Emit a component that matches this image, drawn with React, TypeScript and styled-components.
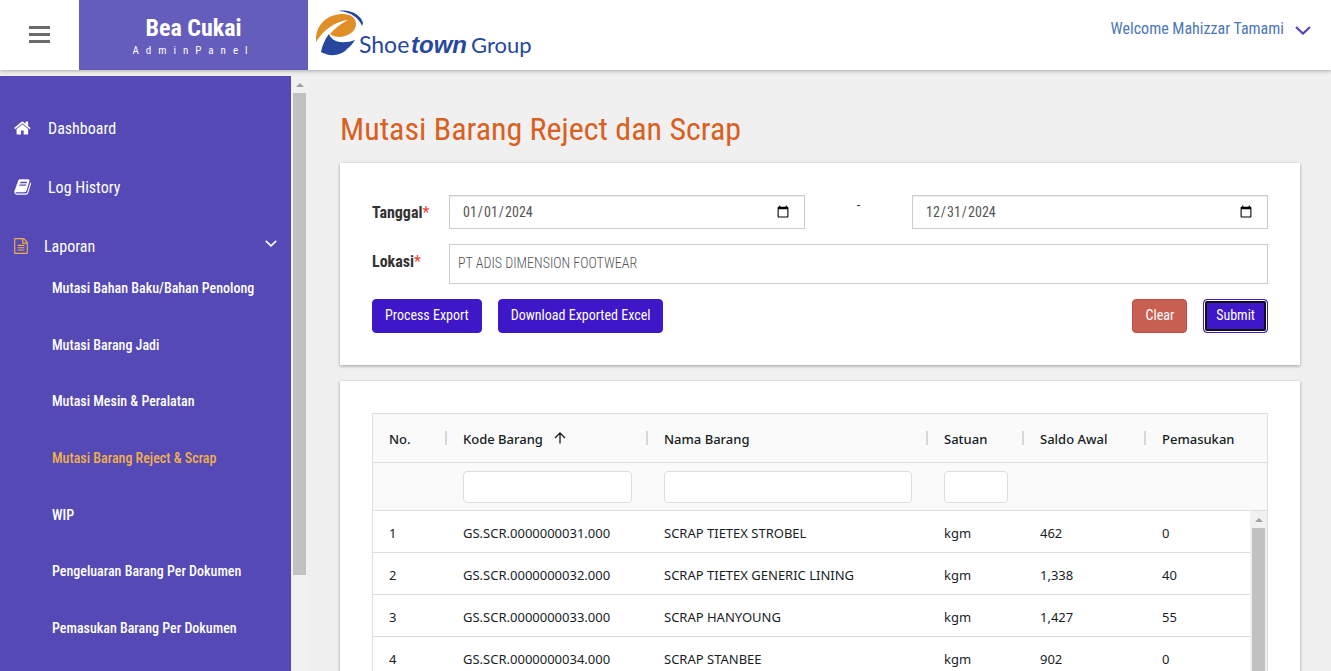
import React from "react";
import styled, { createGlobalStyle } from "styled-components";

const condensed = `"Roboto Condensed", "Liberation Sans Narrow", Roboto, sans-serif`;
const gridFont = `"Noto Sans", "Open Sans", sans-serif`;

const GlobalStyle = createGlobalStyle`
  *, *::before, *::after { box-sizing: border-box; }
  body { margin: 0; background: #f0f0f0; color: #333; font: 14px/20px ${condensed}; }
  button, input { font: inherit; }
  ul { list-style: none; margin: 0; padding: 0; }
  a { text-decoration: none; color: inherit; }
`;

const Page = styled.div`
  display: flex;
  flex-direction: column;
  height: 100vh;
  overflow: hidden;
`;

const Header = styled.header`
  display: flex;
  flex: none;
  height: 70px;
  margin-bottom: 6px;
  background: #fff;
  box-shadow: 0 1px 4px rgba(0, 0, 0, 0.3);
`;

const MenuToggle = styled.button`
  display: flex;
  align-items: center;
  justify-content: center;
  width: 79px;
  padding: 0 0 2px;
  border: 0;
  background: none;
  color: #6b6b6b;
`;

const Brand = styled.a`
  display: flex;
  flex-direction: column;
  align-items: center;
  width: 229px;
  padding-top: 12px;
  background: #655dbb;
  color: #fff;
`;

const BrandName = styled.span`
  font-size: 24px;
  line-height: 32px;
  font-weight: 700;
`;

const BrandSub = styled.span`
  font-size: 11px;
  line-height: 14px;
  letter-spacing: 7px;
`;

const LogoLink = styled.a`
  display: block;
  padding: 8px 8px 0;
`;

const UserMenu = styled.button`
  display: flex;
  align-items: center;
  gap: 11px;
  height: 57px;
  margin-left: auto;
  padding: 0 20px 0 0;
  border: 0;
  background: none;
  color: #4d77ba;
  font-size: 16px;
  svg { margin-top: 4px; }
`;

const Body = styled.div`
  display: flex;
  flex: 1;
  min-height: 0;
`;

const Sidebar = styled.aside`
  display: flex;
  flex: none;
  width: 308px;
  overflow: hidden;
`;

const Nav = styled.nav`
  flex: 1;
  padding-top: 23px;
  background: #5449b5;
  color: #fff;
`;

const NavLink = styled.a`
  display: flex;
  align-items: center;
  gap: 16px;
  height: 59px;
  padding: 0 14px;
  font-size: 16px;
  > svg { margin-bottom: 2px; }
`;

const NavChevron = styled.span`
  display: flex;
  margin-left: auto;
  padding-bottom: 6px;
`;

const SubList = styled.ul`
  display: grid;
  grid-auto-rows: 1fr;
  height: 396px;
  margin-top: -16px;
`;

const SubLink = styled.a<{ $active?: boolean }>`
  display: flex;
  align-items: center;
  height: 100%;
  padding-left: 52px;
  font-size: 14px;
  font-weight: 500;
  color: ${(p) => (p.$active ? "#f0b04c" : "#fff")};
`;

const Track = styled.div`
  display: flex;
  flex-direction: column;
  align-items: center;
  width: 17px;
  background: #f1f1f1;
`;

const TrackArrow = styled.span`
  flex: none;
  height: 17px;
  padding-top: 7px;
  &::before {
    content: "";
    display: block;
    border: 4px solid transparent;
    border-top: 0;
    border-bottom-color: #a0a0a0;
  }
`;

const Thumb = styled.span<{ $size: string }>`
  width: 13px;
  height: ${(p) => p.$size};
  background: #c1c1c1;
`;

const Main = styled.main`
  flex: 1;
  min-width: 0;
  padding: 32px 31px 32px 32px;
  overflow: hidden;
`;

const Title = styled.h1`
  margin: 0 0 13px;
  font-size: 32px;
  line-height: 42px;
  font-weight: 400;
  color: #d9601f;
`;

const Card = styled.section`
  margin-bottom: 16px;
  padding: 32px;
  background: #fff;
  box-shadow: 0 1px 3px rgba(0, 0, 0, 0.35);
`;

const FormGrid = styled.form`
  display: grid;
  grid-template-columns: 77px 1fr 107px 1fr;
  row-gap: 15px;
`;

const Label = styled.label`
  padding-top: 8px;
  font-size: 16px;
  font-weight: 700;
  color: #333;
`;

const Required = styled.span`
  font-weight: 400;
  color: #e8432e;
`;

const DateInput = styled.input`
  width: 100%;
  height: 34px;
  padding: 0 12px;
  border: 1px solid #ccc;
  border-radius: 0;
  background: #fff;
  box-shadow: inset 0 1px 1px rgba(0, 0, 0, 0.08);
  color: #555;
  font-size: 14px;
`;

const Dash = styled.span`
  padding-bottom: 14px;
  align-self: center;
  text-align: center;
`;

const TextInput = styled.input`
  grid-column: 2 / -1;
  height: 40px;
  padding: 0 8px 2px;
  border: 1px solid #ccc;
  background: #fff;
  color: #555;
  font-size: 14px;
  font-weight: 300;
`;

const Actions = styled.div`
  grid-column: 1 / -1;
  display: flex;
  gap: 16px;
`;

const Button = styled.button<{ $tone?: "danger"; $focused?: boolean; $end?: boolean }>`
  height: 34px;
  margin-left: ${(p) => (p.$end ? "auto" : "0")};
  padding: 0 12px 2px;
  border: 1px solid ${(p) => (p.$tone ? "#c04f42" : "#3d17c8")};
  border-radius: 4px;
  background: ${(p) => (p.$tone ? "#c85f53" : "#3d17c8")};
  box-shadow: ${(p) => (p.$focused ? "inset 0 0 0 1px #fff, inset 0 0 0 3px #101010" : "none")};
  color: #fff;
  font-size: 14px;
  white-space: nowrap;
`;

const GridFrame = styled.div`
  position: relative;
  border: 1px solid #ddd;
`;

const GridTrack = styled(Track)`
  position: absolute;
  top: 97px;
  right: 0;
  bottom: 0;
`;

const Table = styled.table`
  width: 100%;
  table-layout: fixed;
  border-collapse: separate;
  border-spacing: 0;
  font-family: ${gridFont};
  font-size: 13px;
  color: #181d1f;
  th, td {
    padding: 2px 16px 0;
    text-align: left;
    border-bottom: 1px solid #ddd;
    white-space: nowrap;
  }
`;

const HeadCell = styled.th`
  height: 49px;
  background: linear-gradient(#d8d8d8, #d8d8d8) right center / 2px 14px no-repeat #fafafa;
  && { font-weight: 500; }
  &:last-child { background: #fafafa; }
`;

const HeadLabel = styled.span`
  display: flex;
  align-items: center;
  gap: 11px;
  svg { margin-bottom: 2px; }
`;

const FilterCell = styled.td`
  height: 48px;
  background: #fafafa;
  && { padding-top: 0; }
`;

const FilterInput = styled.input`
  display: block;
  width: 100%;
  height: 32px;
  padding: 0 8px;
  border: 1px solid #ddd;
  border-radius: 4px;
  background: #fff;
`;

const Cell = styled.td`
  height: 42px;
`;

const columns = [
  { name: "No.", width: 74 },
  { name: "Kode Barang", width: 201, filter: true, sorted: true },
  { name: "Nama Barang", width: 280, filter: true },
  { name: "Satuan", width: 96, filter: true },
  { name: "Saldo Awal", width: 122 },
  { name: "Pemasukan" },
];

const rows = [
  ["1", "GS.SCR.0000000031.000", "SCRAP TIETEX STROBEL", "kgm", "462", "0"],
  ["2", "GS.SCR.0000000032.000", "SCRAP TIETEX GENERIC LINING", "kgm", "1,338", "40"],
  ["3", "GS.SCR.0000000033.000", "SCRAP HANYOUNG", "kgm", "1,427", "55"],
  ["4", "GS.SCR.0000000034.000", "SCRAP STANBEE", "kgm", "902", "0"],
];

const reports = [
  "Mutasi Bahan Baku/Bahan Penolong",
  "Mutasi Barang Jadi",
  "Mutasi Mesin & Peralatan",
  "Mutasi Barang Reject & Scrap",
  "WIP",
  "Pengeluaran Barang Per Dokumen",
  "Pemasukan Barang Per Dokumen",
];

const HomeIcon = () => (
  <svg width="18" height="18" viewBox="64 0 1664 1792" fill="currentColor" aria-hidden="true">
    <path d="M1408 992v480q0 26-19 45t-45 19h-384v-384h-256v384h-384q-26 0-45-19t-19-45v-480q0-1 .5-3t.5-3l575-474 575 474q1 2 1 6zm223-69l-62 74q-8 9-21 11h-3q-13 0-21-7l-692-577-692 577q-12 8-24 7-13-2-21-11l-62-74q-8-10-7-23.5t11-21.5l719-599q32-26 76-26t76 26l244 204v-195q0-14 9-23t23-9h192q14 0 23 9t9 23v408l219 182q10 8 11 21.5t-7 23.5z" />
  </svg>
);

const BookIcon = () => (
  <svg width="18" height="18" viewBox="96 0 1664 1792" fill="currentColor" aria-hidden="true">
    <path d="M1703 478q40 57 18 129l-275 906q-19 64-76.5 107.5t-122.5 43.5h-923q-77 0-148.5-53.5t-99.5-131.5q-24-67-2-127 0-4 3-27t4-37q1-8-3-21.5t-3-19.5q2-11 8-21t16.5-23.5 16.5-23.5q23-38 45-91.5t30-91.5q3-10 .5-30t-.5-28q3-11 17-28t17-23q21-36 42-92t25-90q1-9-2.5-32t.5-28q4-13 22-30.5t22-22.5q19-26 42.5-84.5t27.5-96.5q1-8-3-25.5t-2-26.5q2-8 9-18t18-23 17-21q8-12 16.5-30.5t15-35 16-36 19.5-32 26.5-23.5 36-11.5 47.5 5.5l-1 3q38-9 51-9h761q74 0 114 56t18 130l-274 906q-36 119-71.5 153.5t-128.5 34.5h-869q-27 0-38 15-11 16-1 43 24 70 144 70h923q29 0 56-15.5t35-41.5l300-987q7-22 5-57 38 15 59 43zm-1064 2q-4 13 2 22.5t20 9.5h608q13 0 25.5-9.5t16.5-22.5l21-64q4-13-2-22.5t-20-9.5h-608q-13 0-25.5 9.5t-16.5 22.5zm-83 256q-4 13 2 22.5t20 9.5h608q13 0 25.5-9.5t16.5-22.5l21-64q4-13-2-22.5t-20-9.5h-608q-13 0-25.5 9.5t-16.5 22.5z" />
  </svg>
);

const FileIcon = () => (
  <svg width="14" height="16" viewBox="128 0 1536 1792" fill="#f0b04c" aria-hidden="true">
    <path d="M1596 380q28 28 48 76t20 88v1152q0 40-28 68t-68 28h-1344q-40 0-68-28t-28-68v-1600q0-40 28-68t68-28h896q40 0 88 20t76 48zm-444-244v376h376q-10-29-22-41l-313-313q-12-12-41-22zm384 1528v-1024h-416q-40 0-68-28t-28-68v-416h-768v1536h1280zm-1024-864q0-14 9-23t23-9h704q14 0 23 9t9 23v64q0 14-9 23t-23 9h-704q-14 0-23-9t-9-23v-64zm736 224q14 0 23 9t9 23v64q0 14-9 23t-23 9h-704q-14 0-23-9t-9-23v-64q0-14 9-23t23-9h704zm0 256q14 0 23 9t9 23v64q0 14-9 23t-23 9h-704q-14 0-23-9t-9-23v-64q0-14 9-23t23-9h704z" />
  </svg>
);

const Chevron = ({ width, height, color }: { width: number; height: number; color: string }) => (
  <svg width={width} height={height} viewBox="0 0 16 9" fill="none" stroke={color} strokeWidth="2.2" aria-hidden="true">
    <path d="M1 1l7 6.6L15 1" />
  </svg>
);

const SortArrow = () => (
  <svg width="12" height="12" viewBox="0 0 12 12" fill="none" stroke="#181d1f" strokeWidth="1.3" aria-hidden="true">
    <path d="M6 11.500V1.200M1 6l5-5 5 5" />
  </svg>
);

const Logo = () => (
  <svg width="220" height="54" viewBox="0 0 220 54" role="img" aria-label="Shoetown Group">
    <path fill="#e08e26" d="M0 34C-1 17 11 6 27 6c8 0 13 4 13 10 0 7-7 12-16 13-4 0-8-1-10-3 4-5 10-10 18-14C20 13 7 22 0 34z" />
    <path fill="#27479f" d="M13 26c-4 5-7 12-8 18 8 5 20 4 26-3 4-3 6-6 8-9-8 3-16 3-21 0-2-1-4-3-5-6z" />
    <path fill="#27479f" d="M23 3c11-2 22 4 24 12l-1 3C43 10 35 4 23 3z" />
    <g fill="#27479f">
      <text x="43" y="45" fontSize="23" fontFamily="Lato, sans-serif">Shoe</text>
      <text x="95" y="45" fontSize="24" fontFamily="Liberation Sans, sans-serif" fontStyle="italic" fontWeight="700">town</text>
      <text x="155" y="45" fontSize="22" fontFamily="Lato, sans-serif">Group</text>
    </g>
  </svg>
);

export default function App() {
  return (
    <Page>
      <GlobalStyle />
      <Header>
        <MenuToggle type="button" aria-label="Toggle menu">
          <svg width="21" height="17" viewBox="0 0 21 17" fill="currentColor" aria-hidden="true">
            <path d="M0 0h21v3H0zM0 7h21v3H0zM0 14h21v3H0z" />
          </svg>
        </MenuToggle>
        <Brand href="#home">
          <BrandName>Bea Cukai</BrandName>
          <BrandSub>AdminPanel</BrandSub>
        </Brand>
        <LogoLink href="#group"><Logo /></LogoLink>
        <UserMenu type="button">
          Welcome Mahizzar Tamami
          <Chevron width={16} height={9} color="#5449b5" />
        </UserMenu>
      </Header>
      <Body>
        <Sidebar>
          <Nav>
            <NavLink href="#dashboard"><HomeIcon />Dashboard</NavLink>
            <NavLink href="#log"><BookIcon />Log History</NavLink>
            <NavLink href="#laporan">
              <FileIcon />Laporan
              <NavChevron><Chevron width={12} height={7} color="#fff" /></NavChevron>
            </NavLink>
            <SubList>
              {reports.map((name, i) => (
                <li key={name}><SubLink href={`#report-${i + 1}`} $active={i === 3}>{name}</SubLink></li>
              ))}
            </SubList>
          </Nav>
          <Track><TrackArrow /><Thumb $size="81%" /></Track>
        </Sidebar>
        <Main>
          <Title>Mutasi Barang Reject dan Scrap</Title>
          <Card>
            <FormGrid onSubmit={(e) => e.preventDefault()}>
              <Label htmlFor="from">Tanggal<Required>*</Required></Label>
              <DateInput id="from" type="date" defaultValue="2024-01-01" />
              <Dash>-</Dash>
              <DateInput type="date" aria-label="Tanggal akhir" defaultValue="2024-12-31" />
              <Label htmlFor="lokasi">Lokasi<Required>*</Required></Label>
              <TextInput id="lokasi" type="text" defaultValue="PT ADIS DIMENSION FOOTWEAR" />
              <Actions>
                <Button type="button">Process Export</Button>
                <Button type="button">Download Exported Excel</Button>
                <Button type="reset" $tone="danger" $end>Clear</Button>
                <Button type="submit" $focused>Submit</Button>
              </Actions>
            </FormGrid>
          </Card>
          <Card>
            <GridFrame>
              <Table>
                <colgroup>
                  {columns.map((c) => <col key={c.name} width={c.width} />)}
                </colgroup>
                <thead>
                  <tr>
                    {columns.map((c) => (
                      <HeadCell key={c.name} scope="col">
                        <HeadLabel>{c.name}{c.sorted && <SortArrow />}</HeadLabel>
                      </HeadCell>
                    ))}
                  </tr>
                  <tr>
                    {columns.map((c) => (
                      <FilterCell key={c.name}>
                        {c.filter && <FilterInput type="text" aria-label={`Filter ${c.name}`} />}
                      </FilterCell>
                    ))}
                  </tr>
                </thead>
                <tbody>
                  {rows.map((row) => (
                    <tr key={row[0]}>{row.map((value, i) => <Cell key={i}>{value}</Cell>)}</tr>
                  ))}
                </tbody>
              </Table>
              <GridTrack><TrackArrow /><Thumb $size="100%" /></GridTrack>
            </GridFrame>
          </Card>
        </Main>
      </Body>
    </Page>
  );
}
